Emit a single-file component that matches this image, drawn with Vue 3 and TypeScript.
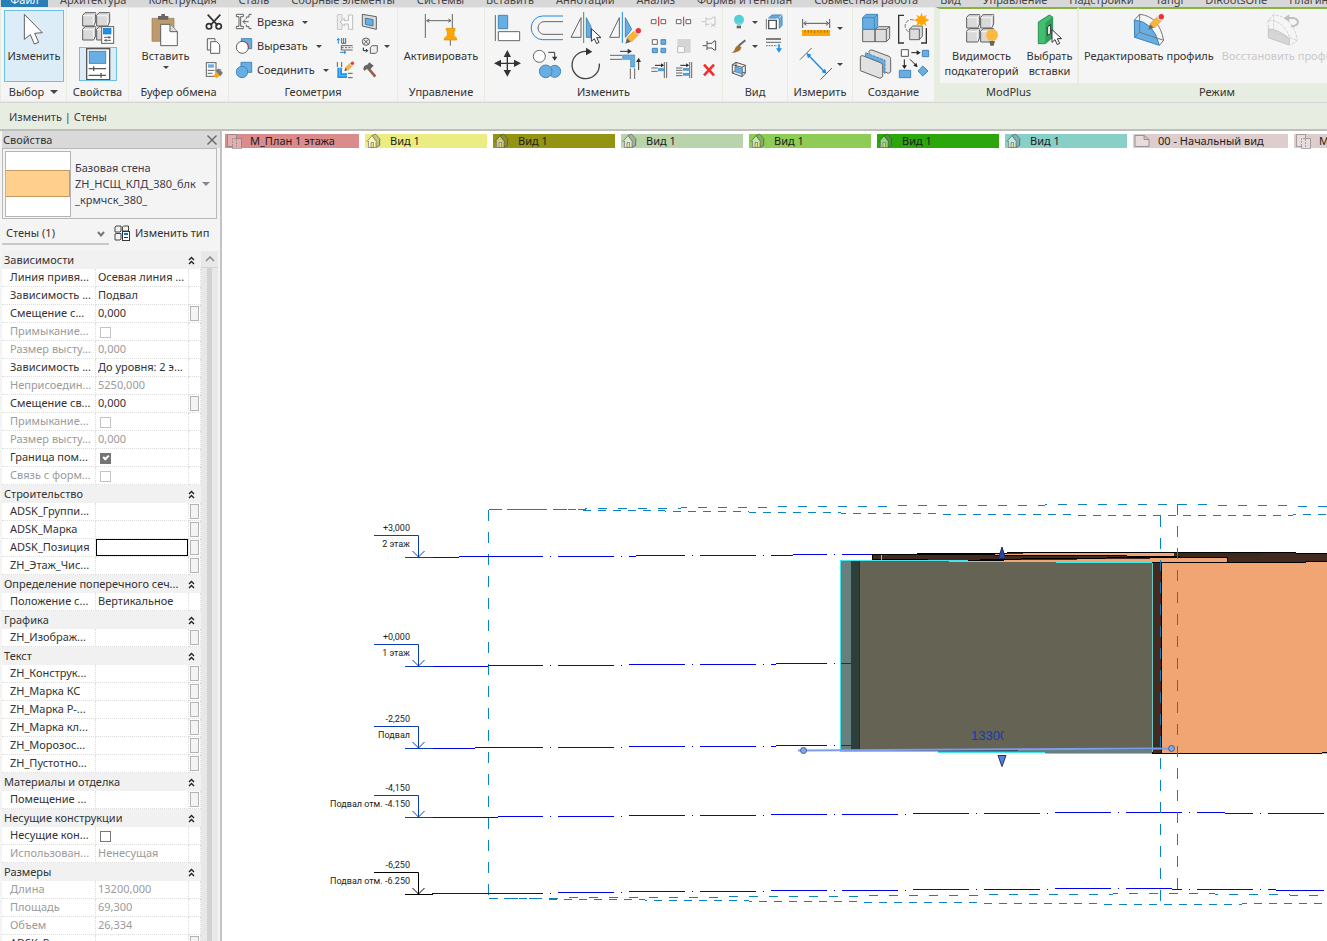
<script setup lang="ts">
import { ref } from 'vue'

interface Prop {
  name: string
  value?: string
  dim?: boolean
  check?: boolean
  checked?: boolean
  more?: boolean
  edit?: boolean
}
interface Group { title: string; rows: Prop[] }
interface Icon { box: string; art: string }
interface Tool { icon: string; title: string; caret?: boolean }
interface ViewTab { name: string; tone: string; kind: 'plan' | 'home' | 'sheet' }

const menu: string[] = [
  'Архитектура', 'Конструкция', 'Сталь', 'Сборные элементы', 'Системы', 'Вставить', 'Аннотации', 'Анализ',
  'Формы и генплан', 'Совместная работа', 'Вид', 'Управление', 'Надстройки', 'Tangl', 'DiRootsOne', 'Плагины'
]

const G = '#5f5f5f'
const B = '#68aee3'
const cubes = (x: number, y: number): string =>
  [[0, 0], [42, 0], [0, 42], [42, 42]].map(([a, b]) =>
    `<path d="M${x + a} ${y + b + 8}l7 -8h32v28l-6 12h-33z" fill="#d9d9d9" stroke="${G}" stroke-width="3"/><path d="M${x + a + 1} ${y + b + 9}h30l7 -8M${x + a + 32} ${y + b + 9}v28" fill="none" stroke="#f6f6f6" stroke-width="3"/>`).join('')
const pencil = (x: number, y: number): string =>
  `<g transform="translate(${x} ${y})"><path d="M0 0l5 -18l12 12z" fill="#666"/><path d="M5 -18l20 -19l13 12l-20 20z" fill="#f9b43c" stroke="#e0992a" stroke-width="2"/><path d="M25 -37l5 -6l13 12l-5 6z" fill="#ddd"/><circle cx="39" cy="-39" r="8" fill="#f03232"/></g>`
const cursor = (x: number, y: number): string =>
  `<path d="M${x} ${y}v38l9 -8l7 15l7 -4l-7 -14h13z" fill="#fff" stroke="#333" stroke-width="3"/>`

const icons: Record<string, Icon> = {
  modify: { box: '15 33 174 108', art: `<path d="M73 43V118L91 104L103 132L116 127L104 100L127 98Z" fill="#fff" stroke="${G}" stroke-width="3"/>` },
  types: { box: '234 30 114 111', art: cubes(245, 38) + `<rect x="302" y="80" width="36" height="50" fill="#fff" stroke="${G}" stroke-width="3"/><rect x="307" y="85" width="23" height="17" fill="#1e90e8" stroke="#1672bc" stroke-width="2"/><path d="M309 112h21M309 121h21M324 108v8M315 117v8" stroke="${G}" stroke-width="3"/>` },
  props: { box: '237 144 108 96', art: `<rect x="257" y="146" width="69" height="93" fill="#fff" stroke="#555" stroke-width="4"/><rect x="265" y="154" width="49" height="36" fill="${B}" stroke="#4789ba" stroke-width="3"/><path d="M263 206H315M278 199V213M263 226H315M300 219V233" stroke="#555" stroke-width="4"/>` },
  paste: { box: '426 30 144 108', art: `<path d="M456 52H522V121H456Z" fill="#bd9a6b" stroke="#9c7c52" stroke-width="2"/><path d="M474 45H484V39H495V45H505V56H474Z" fill="#666"/><path d="M482 70H510L532 92V134H482Z" fill="#fbfbfb" stroke="${G}" stroke-width="3"/><path d="M510 70V92H532" fill="#ddd" stroke="${G}" stroke-width="3"/>` },
  cut: { box: '606 30 72 72', art: `<path d="M623 44L653 76M661 44L631 76" stroke="#333" stroke-width="5"/><circle cx="627" cy="79" r="8" fill="none" stroke="#333" stroke-width="5"/><circle cx="656" cy="79" r="8" fill="none" stroke="#333" stroke-width="5"/>` },
  copyclip: { box: '606 102 72 72', art: `<path d="M622 116H645V122M622 116V150H631" fill="none" stroke="${G}" stroke-width="3"/><path d="M632 125H650L659 134V160H632Z" fill="#fff" stroke="${G}" stroke-width="3"/>` },
  match: { box: '606 174 72 72', art: `<rect x="619" y="188" width="29" height="41" fill="#fff" stroke="${G}" stroke-width="3"/><rect x="624" y="193" width="18" height="10" fill="${B}"/><path d="M623 211H644M623 220H637" stroke="${G}" stroke-width="3"/><path d="M640 228L652 216L661 225L650 235Z" fill="#ffa60a"/><path d="M649 212L655 207L667 218L661 227ZL664 209" fill="#777" stroke="#777" stroke-width="3"/>` },
  cope: { box: '6 30 72 72', art: `<path d="M19 43H40V50H32V79H40V86H19V79H27V50H19Z" fill="#fff" stroke="${G}" stroke-width="3"/><path d="M65 43H57V51H49V56M49 74V80H57V86H65M39 65H56M46 58L39 65L46 72" fill="none" stroke="${G}" stroke-width="3"/>` },
  cutgeo: { box: '6 102 72 72', art: `<path d="M34 116H65V146H54A20 20 0 0 0 34 124Z" fill="${B}" stroke="#4289bb" stroke-width="3"/><circle cx="37" cy="142" r="18" fill="#fff" stroke="${G}" stroke-width="3"/><path d="M34 124A18 18 0 0 1 55 145" fill="none" stroke="#e23030" stroke-width="3"/>` },
  join: { box: '6 174 72 72', art: `<path d="M33 187H65V217H33Z" fill="${B}" stroke="#4289bb" stroke-width="3"/><circle cx="36" cy="216" r="17" fill="${B}" stroke="#4289bb" stroke-width="3"/>` },
  notch: { box: '312 30 72 72', art: `<path d="M325 44H339V88H325Z" fill="#ececec" stroke="#c8c8c8" stroke-width="3"/><path d="M333 66L346 55V62H358V45H371V88H358V72H346V78Z" fill="#fafafa" stroke="#bdbdbd" stroke-width="3"/>` },
  split: { box: '312 102 72 72', art: `<path d="M328 131V117M324 121L328 115L332 121M333 157H350M345 153L351 157L345 161" fill="none" stroke="#1d87dc" stroke-width="3"/><path d="M338 114V130H350V114M344 114V130M371 137H337V150H371" fill="none" stroke="${G}" stroke-width="3"/><path d="M338 143H371" stroke="${G}" stroke-width="3" stroke-dasharray="6 4"/>` },
  walljoin: { box: '312 174 72 72', art: `<path d="M325 186V201M338 186V201M357 220H371M357 233H371" stroke="${G}" stroke-width="3"/><path d="M325 203H339V220H354V234H325Z" fill="#1f94ec"/><path d="M332 204V227H354" fill="none" stroke="#a8d4f5" stroke-width="2"/><g transform="translate(346 214) scale(.62)">${pencil(0, 0)}</g>` },
  opening: { box: '384 30 72 72', art: `<path d="M400 43L442 50V88L400 78Z" fill="#ddd" stroke="${G}" stroke-width="3"/><path d="M409 54L432 59V78L409 73Z" fill="${B}" stroke="#3f7ca9" stroke-width="3"/>` },
  demolish: { box: '384 102 72 72', art: `<circle cx="411" cy="125" r="11" fill="#eee" stroke="${G}" stroke-width="3"/><path d="M404 118L418 132M418 118L404 132" stroke="${G}" stroke-width="3"/><path d="M403 143V152H415M411 147L416 152L411 157" fill="none" stroke="#222" stroke-width="3"/><path d="M424 142L430 137H445V154L440 160H424Z" fill="#eee" stroke="${G}" stroke-width="3"/>` },
  hammer: { box: '384 174 72 72', art: `<path d="M416 203L439 230" stroke="#9b5b50" stroke-width="8"/><path d="M403 208Q402 196 415 194L421 187L434 197L422 209Q412 203 407 213Z" fill="#666"/>` },
  activate: { box: '564 30 144 108', art: `<path d="M589 39V111M670 39V83M593 59H666M601 54L593 59L601 64M658 54L666 59L658 64M664 117V134" fill="none" stroke="#666" stroke-width="3"/><path d="M652 82H678V89H675V104L683 112V117H646V112L655 104V89H652Z" fill="#ffa602" stroke="#d78a00" stroke-width="2"/>` },
  align: { box: '9 30 117 111', art: `<path d="M31 45V123" stroke="#666" stroke-width="3"/><path d="M40 46H68V86H40Z" fill="${B}" stroke="#4289bb" stroke-width="3"/><path d="M40 95H104V122H40Z" fill="#fff" stroke="#666" stroke-width="3"/>` },
  offset: { box: '126 30 117 111', art: `<path d="M234 48H173A34 35 0 0 0 173 119H234" fill="none" stroke="#1d87e5" stroke-width="3"/><path d="M234 65H177A18 19 0 0 0 177 103H234" fill="none" stroke="#666" stroke-width="3"/>` },
  mirrorpick: { box: '243 30 117 111', art: `<path d="M288 53V112H258Z" fill="none" stroke="#666" stroke-width="3"/><path d="M296 36V129" stroke="#1fa855" stroke-width="3"/><path d="M304 53L318 80V112H304Z" fill="${B}" stroke="#4289bb" stroke-width="3"/>${cursor(319, 86)}` },
  mirrordraw: { box: '360 30 117 111', art: `<path d="M403 53V112H374Z" fill="none" stroke="#666" stroke-width="3"/><path d="M412 36V129" stroke="#1d87e5" stroke-width="3"/><path d="M421 53L440 88L421 112Z" fill="${B}" stroke="#4289bb" stroke-width="3"/>${pencil(421, 131)}` },
  move: { box: '9 141 117 108', art: `<path d="M37 190H98M67 160V221" stroke="#333" stroke-width="4"/><path d="M27 190L48 179V201ZM108 190L87 179V201ZM67 150L56 171H78ZM67 230L56 210H78Z" fill="#333"/>` },
  copy: { box: '126 141 117 108', art: `<circle cx="163" cy="169" r="18" fill="#fff" stroke="#666" stroke-width="3"/><path d="M190 157H209V176" fill="none" stroke="#333" stroke-width="3"/><path d="M201 170H217L209 182Z" fill="#333"/><circle cx="209" cy="214" r="18" fill="${B}" stroke="#4289bb" stroke-width="3"/><circle cx="182" cy="214" r="19" fill="${B}" stroke="#4289bb" stroke-width="3"/>` },
  rotate: { box: '243 141 117 108', art: `<path d="M304 154A41 41 0 1 0 343 191" fill="none" stroke="#444" stroke-width="4"/><path d="M303 143L322 155L303 166Z" fill="#333"/>` },
  trim: { box: '360 141 117 108', art: `<path d="M375 166H411M375 178H411M436 205V237M449 205V237" stroke="#666" stroke-width="3"/><path d="M413 165H449V201H437V178H413Z" fill="${B}" stroke="#4289bb" stroke-width="2"/><path d="M405 154H432M461 210V182" stroke="#333" stroke-width="3"/><path d="M428 146L441 154L428 162ZM453 186L461 173L468 186Z" fill="#333"/>` },
  splitel: { box: '483 30 75 72', art: `<path d="M499 59H513V71H499ZM528 59H542V71H528Z" fill="#fff" stroke="#666" stroke-width="3"/><path d="M521 50V78" stroke="#e02020" stroke-width="3"/>` },
  splitgap: { box: '558 30 75 72', art: `<path d="M574 59H588V71H574ZM603 59H617V71H603Z" fill="#fff" stroke="#666" stroke-width="3"/><path d="M596 50V78" stroke="#e02020" stroke-width="3"/>` },
  unpin: { box: '633 30 75 72', art: `<path d="M650 65H662M663 51V79M663 57H678L685 51H690V76M663 73H673M677 70L691 81M691 70L677 81" fill="none" stroke="#c5c5c5" stroke-width="3"/>` },
  array: { box: '483 102 75 72', art: `<path d="M502 119H517V133H502Z" fill="#fff" stroke="#666" stroke-width="3"/><path d="M528 119H542V133H528ZM502 145H517V158H502ZM528 145H542V158H528Z" fill="${B}" stroke="#4289bb" stroke-width="3"/>` },
  scale: { box: '558 102 75 72', art: `<path d="M577 117H617V158H600V137H577Z" fill="#d5d5d5"/><path d="M578 139H598V158H578Z" fill="#f8f8f8" stroke="#bbb" stroke-width="3"/>` },
  pin: { box: '633 102 75 72', art: `<path d="M653 137H665M666 123V150M666 130H681L687 123H692V150H687L681 144H666" fill="none" stroke="#555" stroke-width="3"/>` },
  extend: { box: '483 174 75 72', art: `<path d="M499 204H518M499 214H518M538 186V234M545 186V234" stroke="#666" stroke-width="3"/><path d="M519 209H538" stroke="#4f9fd8" stroke-width="9"/><path d="M510 196H532" stroke="#222" stroke-width="3"/><path d="M528 190L537 196L528 202Z" fill="#222"/>` },
  extendmany: { box: '558 174 75 72', art: `<path d="M573 204H592M573 211H592M573 219H592M573 227H592M614 186V234M620 186V234" stroke="#666" stroke-width="3"/><path d="M594 208H613M594 223H613" stroke="#4f9fd8" stroke-width="8"/><path d="M586 196H608" stroke="#222" stroke-width="3"/><path d="M604 190L612 196L604 202Z" fill="#222"/>` },
  remove: { box: '633 174 75 72', art: `<path d="M657 194L687 226M687 194L657 226" stroke="#f22e2e" stroke-width="8"/>` },
  hide: { box: '21 30 72 72', art: `<circle cx="57" cy="59" r="15" fill="#55cfd5"/><path d="M49 68H66L63 76H51Z" fill="#7bd7db"/><path d="M50 77H63V85H50Z" fill="#666"/>` },
  override: { box: '21 102 72 72', art: `<path d="M55 138L76 121" stroke="#666" stroke-width="6"/><path d="M33 159Q44 154 46 143Q55 131 64 142Q62 158 33 159Z" fill="#a4702d"/>` },
  selbox: { box: '21 174 72 72', art: `<path d="M37 194L48 187L76 196V219L66 230L37 219ZM37 194L66 202L76 196M66 202V230M48 187V210L76 219M48 210L37 219" fill="#eee" stroke="#555" stroke-width="3"/><path d="M45 200L67 207V222L45 215Z" fill="${B}" stroke="#3f7ca9" stroke-width="2"/>` },
  displace: { box: '126 30 72 72', art: `<path d="M146 54L156 45H186V76L178 85V54Z" fill="${B}" stroke="#4289bb" stroke-width="3"/><path d="M177 54L186 45M171 54V61" stroke="#fff" stroke-width="2"/><path d="M146 61H169V86H146Z" fill="#fff" stroke="#555" stroke-width="4"/><path d="M139 57V88" stroke="#333" stroke-width="2"/>` },
  thin: { box: '126 102 72 72', art: `<path d="M138 117H183" stroke="#666" stroke-width="5"/><path d="M138 127H183" stroke="#666" stroke-width="3"/><path d="M138 137H172" stroke="#666" stroke-width="3" stroke-dasharray="5 3"/><path d="M177 133V149" stroke="#1f94ec" stroke-width="5"/><path d="M168 145H186L177 158Z" fill="#1f94ec"/>` },
  dim: { box: '231 30 108 108', art: `<path d="M245 57V84M326 57V84M251 70H320M256 64L248 70L256 76M315 64L323 70L315 76" fill="none" stroke="#555" stroke-width="3"/><path d="M243 90H327V108H243Z" fill="#ffa602"/><path d="M252 91V98M262 91V98M271 91V98M281 91V100M291 91V98M300 91V98M310 91V98M319 91V98" stroke="#555" stroke-width="2"/>` },
  aligned: { box: '231 138 108 108', art: `<path d="M237 179L272 144M298 239L333 204" stroke="#666" stroke-width="3"/><path d="M261 164L311 216" stroke="#1d87e5" stroke-width="4"/><path d="M256 159L271 164L261 175ZM317 221L302 217L312 206Z" fill="#1d87e5"/>` },
  assembly: { box: '417 30 108 111', art: `<path d="M428 88H465V125H428ZM465 88L476 80H509V115L499 125H465ZM465 88H499V125M499 88L509 80" fill="#ddd" stroke="#666" stroke-width="3"/><path d="M428 53L438 43H473V78L463 88H428ZM428 53H463V88M463 53L473 43" fill="${B}" stroke="#4289bb" stroke-width="3"/>` },
  group: { box: '525 30 108 111', art: `<path d="M552 46H536V129H552M603 129H619V84" fill="none" stroke="#333" stroke-width="4"/><path d="M581 60A18 18 0 1 0 568 96" fill="none" stroke="#777" stroke-width="3" stroke-dasharray="11 4"/><path d="M569 87L578 78H607V109L598 119H569ZM569 87H598V119" fill="#ddd" stroke="#666" stroke-width="3"/><path d="M605 38L609 50L620 44L616 55L628 60L616 66L620 78L609 71L605 84L600 71L589 77L593 66L581 60L594 55L589 44L600 50Z" fill="#ffa602"/>` },
  parts: { box: '417 141 108 108', art: `<path d="M447 154Q450 148 456 150L507 169Q512 171 512 176V216L505 220L447 196Z" fill="#ddd" stroke="#666" stroke-width="3"/><path d="M436 158L495 181V220L436 196Z" fill="${B}" stroke="#4289bb" stroke-width="3" stroke-dasharray="9 3"/><path d="M421 172Q421 166 428 167L481 188Q488 191 488 196V230L480 235L421 212Z" fill="#e1e1e1" stroke="#666" stroke-width="3"/>` },
  similar: { box: '525 141 108 108', art: `<path d="M544 149H565V169H544Z" fill="#fff" stroke="#555" stroke-width="3"/><path d="M607 151H626V170H607ZM538 211H572V233H538ZM608 198L624 213L608 228L594 213Z" fill="${B}" stroke="#4289bb" stroke-width="3"/><path d="M574 158H594M553 178V200M570 178L587 195" stroke="#222" stroke-width="3"/><path d="M590 151L602 158L590 165ZM546 196H561L553 207ZM593 202L580 197L589 188Z" fill="#222"/>` },
  subcat: { box: '96 30 120 108', art: cubes(110, 41) + '<circle cx="186" cy="102" r="18" fill="#fdb840"/><path d="M178 120H195L191 134H181Z" fill="#666"/>' },
  inserts: { box: '300 30 120 108', art: `<path d="M325 63L358 42L368 48V109L346 128H325Z" fill="#43bd70" stroke="#2a9251" stroke-width="3"/><path d="M346 66L368 48V109L346 128Z" fill="#2f9f5a"/><path d="M352 78L362 71V98L352 103Z" fill="#e8e8e8" stroke="#333" stroke-width="3"/>${cursor(366, 86)}` },
  editprofile: { box: '600 30 120 108', art: `<path d="M616 57Q675 62 691 133L617 109Z" fill="${B}" stroke="#3d83b5" stroke-width="3"/><path d="M616 57L632 40Q690 45 704 118L691 133M632 40V94L617 109M632 94L704 118" fill="none" stroke="#777" stroke-width="3"/>${pencil(658, 86)}` },
  restore: { box: '1008 30 120 108', art: `<path d="M1024 83Q1060 88 1087 113V132L1024 110Z" fill="#d6d6d6" stroke="#c4c4c4" stroke-width="3"/><path d="M1024 80V57L1040 41Q1100 50 1111 118L1090 133M1040 41V94L1110 118M1024 57Q1070 60 1089 110" fill="none" stroke="#cfcfcf" stroke-width="3" stroke-dasharray="9 4"/><path d="M1082 51H1099Q1113 54 1113 64Q1111 75 1092 76" fill="none" stroke="#c0c0c0" stroke-width="6"/><path d="M1070 51L1087 40V62Z" fill="#c0c0c0"/>` }
}

const clipboard: Tool[] = [
  { icon: 'cut', title: 'Вырезать в буфер' }, { icon: 'copyclip', title: 'Копировать в буфер' }, { icon: 'match', title: 'Копировать свойства типа' }
]
const geoMain = [
  { icon: 'cope', label: 'Врезка' }, { icon: 'cutgeo', label: 'Вырезать' }, { icon: 'join', label: 'Соединить' }
]
const geoSmall: Tool[] = [
  { icon: 'notch', title: 'Врезка' }, { icon: 'opening', title: 'Проем' },
  { icon: 'split', title: 'Разделить' }, { icon: 'demolish', title: 'Снести', caret: true },
  { icon: 'walljoin', title: 'Соединение стен' }, { icon: 'hammer', title: 'Снос' }
]
const modifyBig: Tool[] = [
  { icon: 'align', title: 'Выровнять' }, { icon: 'offset', title: 'Сместить' }, { icon: 'mirrorpick', title: 'Зеркало' }, { icon: 'mirrordraw', title: 'Зеркало по оси' },
  { icon: 'move', title: 'Переместить' }, { icon: 'copy', title: 'Копировать' }, { icon: 'rotate', title: 'Повернуть' }, { icon: 'trim', title: 'Обрезать' }
]
const modifySmall: Tool[] = [
  { icon: 'splitel', title: 'Разделить элемент' }, { icon: 'splitgap', title: 'Разделить с зазором' }, { icon: 'unpin', title: 'Открепить' },
  { icon: 'array', title: 'Массив' }, { icon: 'scale', title: 'Масштаб' }, { icon: 'pin', title: 'Прикрепить' },
  { icon: 'extend', title: 'Удлинить' }, { icon: 'extendmany', title: 'Удлинить несколько' }, { icon: 'remove', title: 'Удалить' }
]
const viewTools: Tool[] = [
  { icon: 'hide', title: 'Скрыть', caret: true }, { icon: 'displace', title: 'Сместить элементы' },
  { icon: 'override', title: 'Переопределить', caret: true }, { icon: 'thin', title: 'Линии' },
  { icon: 'selbox', title: 'Рамка выбора' }
]
const measureTools: Tool[] = [{ icon: 'dim', title: 'Размер', caret: true }, { icon: 'aligned', title: 'Измерить', caret: true }]
const createTools: Tool[] = [
  { icon: 'assembly', title: 'Сборка' }, { icon: 'group', title: 'Группа' }, { icon: 'parts', title: 'Части' }, { icon: 'similar', title: 'Подобные' }
]

const tabs: ViewTab[] = [
  { name: 'М_План 1 этажа', tone: 'red', kind: 'plan' },
  { name: 'Вид 1', tone: 'yellow', kind: 'home' },
  { name: 'Вид 1', tone: 'olive', kind: 'home' },
  { name: 'Вид 1', tone: 'sage', kind: 'home' },
  { name: 'Вид 1', tone: 'lime', kind: 'home' },
  { name: 'Вид 1', tone: 'green', kind: 'home' },
  { name: 'Вид 1', tone: 'teal', kind: 'home' },
  { name: '00 - Начальный вид', tone: 'rose', kind: 'sheet' },
  { name: 'М_План', tone: 'rose', kind: 'plan' }
]

const groups = ref<Group[]>([
  { title: 'Зависимости', rows: [
    { name: 'Линия привя...', value: 'Осевая линия ...' },
    { name: 'Зависимость ...', value: 'Подвал' },
    { name: 'Смещение с...', value: '0,000', more: true },
    { name: 'Примыкание...', check: true, dim: true },
    { name: 'Размер высту...', value: '0,000', dim: true },
    { name: 'Зависимость ...', value: 'До уровня: 2 э...' },
    { name: 'Неприсоедин...', value: '5250,000', dim: true },
    { name: 'Смещение св...', value: '0,000', more: true },
    { name: 'Примыкание...', check: true, dim: true },
    { name: 'Размер высту...', value: '0,000', dim: true },
    { name: 'Граница пом...', check: true, checked: true },
    { name: 'Связь с форм...', check: true, dim: true }
  ] },
  { title: 'Строительство', rows: [
    { name: 'ADSK_Группи...', more: true },
    { name: 'ADSK_Марка', more: true },
    { name: 'ADSK_Позиция', more: true, edit: true },
    { name: 'ZH_Этаж_Чис...', more: true }
  ] },
  { title: 'Определение поперечного сеч...', rows: [{ name: 'Положение с...', value: 'Вертикальное' }] },
  { title: 'Графика', rows: [{ name: 'ZH_Изображ...', more: true }] },
  { title: 'Текст', rows: [
    { name: 'ZH_Конструк...', more: true },
    { name: 'ZH_Марка КС', more: true },
    { name: 'ZH_Марка Р-...', more: true },
    { name: 'ZH_Марка кл...', more: true },
    { name: 'ZH_Морозос...', more: true },
    { name: 'ZH_Пустотно...', more: true }
  ] },
  { title: 'Материалы и отделка', rows: [{ name: 'Помещение ...', more: true }] },
  { title: 'Несущие конструкции', rows: [
    { name: 'Несущие кон...', check: true },
    { name: 'Использован...', value: 'Ненесущая', dim: true }
  ] },
  { title: 'Размеры', rows: [
    { name: 'Длина', value: '13200,000', dim: true },
    { name: 'Площадь', value: '69,300', dim: true },
    { name: 'Объем', value: '26,334', dim: true },
    { name: 'ADSK_Размер...', more: true }
  ] }
])

const levels = [
  { y: 557, mark: '+3,000', name: '2 этаж', black: false },
  { y: 666, mark: '+0,000', name: '1 этаж', black: false },
  { y: 748, mark: '-2,250', name: 'Подвал', black: false },
  { y: 817, mark: '-4,150', name: 'Подвал отм. -4.150', black: false },
  { y: 894, mark: '-6,250', name: 'Подвал отм. -6.250', black: true }
]
</script>

<template>
  <div class="app">
    <nav class="menu">
      <a href="#" class="file">Файл</a>
      <a v-for="m in menu" :key="m" href="#">{{ m }}</a>
    </nav>

    <div class="ribbon">
      <section class="panel p-select">
        <div class="body">
          <button class="big active">
            <svg class="i58" :viewBox="icons.modify.box" v-html="icons.modify.art" />
            <span>Изменить</span>
          </button>
        </div>
        <h2><button class="title-btn">Выбор <i class="caret wide" /></button></h2>
      </section>

      <section class="panel p-props">
        <div class="body col">
          <button class="cell c38" aria-label="Свойства типа"><svg :viewBox="icons.types.box" v-html="icons.types.art" /></button>
          <button class="cell on" aria-label="Свойства"><svg :viewBox="icons.props.box" v-html="icons.props.art" /></button>
        </div>
        <h2>Свойства</h2>
      </section>

      <section class="panel p-clip">
        <div class="body">
          <button class="big">
            <svg class="i48" :viewBox="icons.paste.box" v-html="icons.paste.art" />
            <span>Вставить</span>
            <i class="caret" />
          </button>
          <div class="smalls one">
            <button v-for="t in clipboard" :key="t.icon" class="sm" :aria-label="t.title"><svg :viewBox="icons[t.icon].box" v-html="icons[t.icon].art" /></button>
          </div>
        </div>
        <h2>Буфер обмена</h2>
      </section>

      <section class="panel p-geo">
        <div class="body">
          <div class="lines">
            <button v-for="g in geoMain" :key="g.icon" class="line">
              <svg :viewBox="icons[g.icon].box" v-html="icons[g.icon].art" /><span>{{ g.label }}</span><i class="caret" />
            </button>
          </div>
          <div class="smalls geo">
            <button v-for="t in geoSmall" :key="t.icon" class="sm" :aria-label="t.title"><svg :viewBox="icons[t.icon].box" v-html="icons[t.icon].art" /><i v-if="t.caret" class="caret" /></button>
          </div>
        </div>
        <h2>Геометрия</h2>
      </section>

      <section class="panel p-act">
        <div class="body">
          <button class="big">
            <svg class="i48" :viewBox="icons.activate.box" v-html="icons.activate.art" />
            <span>Активировать</span>
          </button>
        </div>
        <h2>Управление</h2>
      </section>

      <section class="panel p-mod">
        <div class="body">
          <div class="bigs">
            <button v-for="t in modifyBig" :key="t.icon" class="cell" :aria-label="t.title"><svg :viewBox="icons[t.icon].box" v-html="icons[t.icon].art" /></button>
          </div>
          <div class="smalls three">
            <button v-for="t in modifySmall" :key="t.icon" class="sm" :aria-label="t.title"><svg :viewBox="icons[t.icon].box" v-html="icons[t.icon].art" /></button>
          </div>
        </div>
        <h2>Изменить</h2>
      </section>

      <section class="panel p-view">
        <div class="body">
          <div class="smalls view">
            <button v-for="t in viewTools" :key="t.icon" class="sm" :aria-label="t.title"><svg :viewBox="icons[t.icon].box" v-html="icons[t.icon].art" /><i v-if="t.caret" class="caret" /></button>
          </div>
        </div>
        <h2>Вид</h2>
      </section>

      <section class="panel p-meas">
        <div class="body col">
          <button v-for="t in measureTools" :key="t.icon" class="sm meas" :aria-label="t.title"><svg :viewBox="icons[t.icon].box" v-html="icons[t.icon].art" /><i class="caret" /></button>
        </div>
        <h2>Измерить</h2>
      </section>

      <section class="panel p-create">
        <div class="body">
          <div class="bigs two">
            <button v-for="t in createTools" :key="t.icon" class="cell" :aria-label="t.title"><svg :viewBox="icons[t.icon].box" v-html="icons[t.icon].art" /></button>
          </div>
        </div>
        <h2>Создание</h2>
      </section>

      <section class="panel ctx p-plus">
        <div class="body">
          <button class="big">
            <svg class="i40" :viewBox="icons.subcat.box" v-html="icons.subcat.art" />
            <span>Видимость<br>подкатегорий</span>
          </button>
          <button class="big">
            <svg class="i40" :viewBox="icons.inserts.box" v-html="icons.inserts.art" />
            <span>Выбрать<br>вставки</span>
          </button>
        </div>
        <h2>ModPlus</h2>
      </section>

      <section class="panel ctx p-mode">
        <div class="body">
          <button class="big">
            <svg class="i40" :viewBox="icons.editprofile.box" v-html="icons.editprofile.art" />
            <span>Редактировать профиль</span>
          </button>
          <button class="big" disabled>
            <svg class="i40" :viewBox="icons.restore.box" v-html="icons.restore.art" />
            <span>Восстановить профиль</span>
          </button>
        </div>
        <h2>Режим</h2>
      </section>
    </div>

    <div class="options">Изменить | Стены</div>

    <main class="work">
      <aside class="palette">
        <header class="pal-head">
          <span>Свойства</span>
          <button aria-label="Закрыть"><svg viewBox="0 0 10 10"><path d="M0.5 0.5L9.5 9.5M9.5 0.5L0.5 9.5" /></svg></button>
        </header>
        <button class="type">
          <span class="thumb"><i /></span>
          <span class="type-name">Базовая стена<br>ZH_НСЩ_КЛД_380_блк<br>_крмчск_380_</span>
          <i class="caret grey" />
        </button>
        <div class="filter">
          <div class="pick">
            <select aria-label="Фильтр элементов"><option>Стены (1)</option></select>
            <svg viewBox="0 0 8 6"><path d="M1 1L4 4.5L7 1" /></svg>
          </div>
          <button class="edit-type">
            <svg viewBox="0 0 16 16">
              <path d="M1 2L2 1H7V6L6 7H1ZM8.500 2L9.500 1H14.500V6H8.500ZM1 9L2 8.500H7V14L6 15H1Z" fill="#f3f3f3" stroke="#444" />
              <rect x="8.500" y="6.500" width="7" height="9" fill="#fff" stroke="#334" />
              <path d="M10 8h4v2h-4z" fill="#1672bc" /><path d="M10 12.500h4" stroke="#334" />
            </svg>
            <span>Изменить тип</span>
          </button>
        </div>
        <div class="grid-wrap">
          <table>
            <colgroup><col class="cn"><col class="cv"><col class="cb"></colgroup>
            <tbody v-for="(g, gi) in groups" :key="g.title">
              <tr class="group">
                <th colspan="3"><div><span>{{ g.title }}</span>
                  <button :aria-label="'Свернуть ' + g.title"><svg viewBox="0 0 7 9"><path d="M1 4L3.500 1.500L6 4M1 8L3.500 5.500L6 8" /></svg></button></div></th>
              </tr>
              <tr v-for="(r, ri) in g.rows" :key="ri" :class="{ dim: r.dim }">
                <td class="name"><label :for="`p${gi}-${ri}`">{{ r.name }}</label></td>
                <td class="val">
                  <input v-if="r.check" :id="`p${gi}-${ri}`" v-model="r.checked" type="checkbox" :disabled="r.dim">
                  <input v-else :id="`p${gi}-${ri}`" v-model="r.value" type="text" :class="{ edit: r.edit }" :disabled="r.dim">
                </td>
                <td class="more"><button v-if="r.more" :aria-label="'Связать ' + r.name" /></td>
              </tr>
            </tbody>
          </table>
          <div class="scroll">
            <button aria-label="Вверх"><svg viewBox="0 0 10 6"><path d="M1 5L5 1L9 5" /></svg></button>
            <i />
          </div>
        </div>
      </aside>

      <section class="view">
        <div class="tabs">
          <button v-for="(t, i) in tabs" :key="i" class="tab" :class="[t.tone, t.kind]">
            <svg v-if="t.kind === 'home'" viewBox="0 0 16 16">
              <path d="M6 2.500L9.500 1L14.500 6.500V12.500L10 15V9Z" fill="#777" fill-opacity=".35" />
              <path d="M2 8L6 3.500L10 8.500V15H2Z" fill="#fff" fill-opacity=".5" />
              <path d="M0.500 9L6 2.500L10.500 8.500M2.500 8V14.500H10V9M6 2.500L9.500 1L14.500 6.500M13.500 6.500V12.500L10 14.500" fill="none" stroke="#444" stroke-opacity=".5" />
              <path d="M5 9.500H7.500V14.500H5Z" fill="#f5d27c" fill-opacity=".8" stroke="#555" stroke-opacity=".5" />
            </svg>
            <svg v-else-if="t.kind === 'plan'" viewBox="0 0 16 16">
              <path d="M1.500 1.500H10.500V5.500H15.500V15.500H6.500V13.500H1.500Z" fill="#fff" fill-opacity=".3" stroke="#777" stroke-opacity=".6" />
              <path d="M6.500 13V5.500H10M10.500 6V15" fill="none" stroke="#777" stroke-opacity=".6" stroke-dasharray="2 1" />
            </svg>
            <svg v-else viewBox="0 0 16 16"><path d="M1 2.500h9l5 4v7h-14zM10 2.500v4h5" fill="#fff" fill-opacity=".3" stroke="#777" stroke-opacity=".7" /></svg>
            <span>{{ t.name }}</span>
          </button>
        </div>

        <svg class="canvas" role="img" aria-label="Трёхмерный вид с уровнями">
          <defs><clipPath id="dimclip"><rect x="960" y="725" width="44" height="20" /></clipPath></defs>
          <g transform="translate(-222 -150)">
            <g class="box">
              <path class="d22" d="M488.500 510V898" />
              <path d="M489 509.500H502M507 509.500H538" />
              <path class="up" d="M538 509.500L824 506.500L971 505.500L1120 504.500H1177L1327 506.500" />
              <path class="lo" d="M538 509.500L790 512.500L990 514.500L1160 515.500L1260 515.500L1327 514.500" />
              <path class="up" d="M489 898.500L800 896.500L1177 893.500L1327 895.500" />
              <path class="lo" d="M489 898.500L800 901.500L1160 904.500L1327 903.500" />
            </g>

            <g class="level-lines">
              <path d="M432 557.500H459M459 556.500H543M550 556.500h1" /><path class="dd" d="M558 556.500L872 554.500" />
              <path d="M432 666.500H488M488 665.500H543M550 665.500h1" /><path class="dd" d="M558 665.500L851 663.500" />
              <path d="M432 748.500H475M475 747.500H543M550 747.500h1" /><path class="dd" d="M558 747.500L851 745.500" />
              <path d="M432 817.500H498M498 816.500H543M550 816.500h1" /><path class="dd" d="M558 816.500L1120 812.500L1327 813.500" />
              <path d="M432 893.500H543M550 893.500h1" /><path class="dd" d="M558 892.500L1120 888.500L1327 890.500" />
            </g>

            <g v-for="l in levels" :key="l.mark" class="level" :class="{ black: l.black }">
              <path :d="`M374 ${l.y - 21.5}H418.500V${l.y}M412.500 ${l.y - 6}L418.500 ${l.y}L424.500 ${l.y - 6}M405 ${l.y + 0.5}H433`" />
              <text x="410" :y="l.y - 26">{{ l.mark }}</text>
              <text x="410" :y="l.y - 10">{{ l.name }}</text>
            </g>

            <g shape-rendering="crispEdges">
              <path d="M872 554.500L1053 552.500H1264L1327 553.500V562H1152L872 559.500Z" fill="#422a20" stroke="#000" />
              <path d="M1174 553H1262V556H1174Z" fill="#392b1a" />
              <path d="M881 555h1v5h-1z" fill="#f0a573" />
              <path d="M967 554L1079 553H1174V556H1074L967 555Z" fill="#f0a573" />
              <path d="M913 554.500L1074 555.500L1180 556.500" fill="none" stroke="#000" />
              <path d="M968 561L1150 558.500L1227.500 557.500V562H968Z" fill="#f0a573" />
              <path d="M980 559.500L1150 557.500H1227.500V562" fill="none" stroke="#000" />
              <path d="M1162 562H1327V753.500H1162Z" fill="#f0a573" />
              <path d="M1152 562H1162V754H1152Z" fill="#422a20" />
              <path d="M1152 562.500H1306M1306 561.500H1327M1161.500 562V754M1152 753.500H1177M1177 753.500H1322M1322 752.500H1327M1152.500 751V754" fill="none" stroke="#000" />
              <path d="M840 560H851V750H840Z" fill="#677f7f" />
              <path d="M851 560H860V750H851Z" fill="#2d3f3b" />
              <path d="M860 561H949V562H1152V749L860 750Z" fill="#656353" />
              <path d="M859.500 560V750" stroke="#22312e" />
              <path d="M860 750.500L1152 749.500V753.500L935 752Z" fill="#668080" />
              <path d="M860 750.500H1018M1018 749.500H1152" stroke="#263230" />
              <path d="M841 663.500H851M841 745.500H851" stroke="#1a2a80" />
              <path d="M840.500 751V560M840 560.500H968M949 561.500H1074M1056 562.500H1152" fill="none" stroke="#40e8ec" />
              <path d="M1152.500 562.500V752" stroke="#70c8c4" />
              <path d="M840 751.500H938M938 752.500H1045M1045 753.500H1152" stroke="#40e8ec" />
            </g>

            <g class="box">
              <path class="d22" d="M1160.500 516V904" /><path class="d22" d="M1177.500 504V893" />
            </g>

            <path d="M798 750.500L1172 748.500" stroke="#7b9cf0" stroke-width="2" />
            <circle cx="803.500" cy="750.500" r="3" class="grip" /><circle cx="1171.500" cy="748.500" r="3" class="grip" />
            <path d="M1002 547L1005.500 558.500H998.500Z" fill="#2747a4" stroke="#1d2b5e" />
            <path d="M998 755.500H1006L1002 766.500Z" fill="#5580dc" stroke="#23335f" />
            <text x="971" y="740" class="dim-text" clip-path="url(#dimclip)">13300</text>
          </g>
        </svg>
      </section>
    </main>
  </div>
</template>

<style>
html, body { margin: 0; height: 100%; overflow: hidden; }
</style>

<style scoped>
.app { height: 100vh; display: flex; flex-direction: column; overflow: hidden; background: #fff; color: #333; font: 11px/16px "Noto Sans", "Open Sans", sans-serif; }
button { border: 0; padding: 0; margin: 0; background: none; font: inherit; color: inherit; }
svg { display: block; flex: none; }
.menu { flex: none; height: 7px; background: #d8d8d8; display: flex; align-items: flex-end; overflow: hidden; padding-left: 1px; }
.menu a { flex: none; color: #444; text-decoration: none; line-height: 14px; height: 14px; white-space: nowrap; margin-right: 22px; }
.menu .file { background: #2a7db5; color: #fff; width: 47px; text-align: center; margin-right: 12px; }

.ribbon { flex: none; height: 94px; display: flex; background: #e8ede1; border-bottom: 1px solid #e8ede1; padding-left: 1px; overflow: hidden; box-shadow: inset 0 1px #e8ede1; }
.panel { flex: none; display: flex; flex-direction: column; background: #f5f5f5; border-right: 1px solid #e8ede1; margin-top: 1px; box-sizing: border-box; }
.body { flex: 1; display: flex; padding-top: 2px; box-sizing: border-box; }
.body.col { flex-direction: column; align-items: center; }
.panel h2 { margin: 0; height: 18px; font-size: 11px; font-weight: 400; line-height: 18px; text-align: center; white-space: nowrap; }
.title-btn { display: inline-flex; align-items: center; gap: 6px; }
.p-select { width: 66px; }
.p-props { width: 62px; }
.p-clip { width: 100px; }
.p-geo { width: 169px; }
.p-act { width: 87px; }
.p-mod { width: 238px; }
.p-view { width: 65px; }
.p-meas { width: 65px; }
.p-create { width: 82px; }
.ctx { border-top: 2px solid #86b53e; margin-top: 0; border-right: 2px solid #e8ede1; }
.ctx .body { padding-top: 1px; }
.ctx h2 { background: #e8ede1; }
.p-plus { width: 144px; border-left: 5px solid #e8ede1; }
.p-mode { width: 278px; }

.big { display: flex; flex-direction: column; align-items: center; line-height: 15px; white-space: nowrap; }
.big[disabled] { color: #c9c9c9; }
.big .caret { margin-top: 3px; }
.active { width: 60px; height: 72px; margin-left: 3px; box-sizing: border-box; border: 1px solid #6cbfe8; background: #dcedf7; }
.active span { padding-top: 1px; }
.i58 { width: 58px; height: 36px; }
.i48 { width: 48px; height: 38px; }
.i40 { width: 40px; height: 38px; }
.caret { flex: none; width: 0; height: 0; border: 3px solid transparent; border-top-color: #444; border-bottom: 0; }
.caret.wide { border-width: 4px 4px 0; }
.caret.grey { border-width: 4px 4px 0; border-top-color: #888; }
.cell svg { width: 100%; height: 100%; }
.c38 { width: 38px; height: 37px; }
.on { width: 38px; height: 34px; box-sizing: border-box; border: 1px solid #6cbfe8; background: #dcedf7; }
.p-clip .big { width: 73px; }
.p-act .big { flex: 1; }
.smalls { display: grid; grid-auto-rows: 24px; align-content: start; }
.sm { display: flex; align-items: center; }
.sm svg { width: 24px; height: 24px; }
.lines { width: 105px; padding-left: 3px; box-sizing: border-box; }
.line { display: flex; align-items: center; height: 24px; white-space: nowrap; }
.line svg { width: 24px; height: 24px; }
.line span { margin: 0 8px 0 1px; }
.geo { grid-template-columns: 24px 40px; }
.geo .caret { margin-left: 3px; }
.bigs { display: grid; grid-template-columns: repeat(4, 39px); grid-template-rows: 37px 36px; padding-left: 3px; }
.bigs.two { grid-template-columns: 36px 36px; padding-left: 6px; }
.three { grid-template-columns: repeat(3, 25px); margin-left: 2px; }
.three .sm svg { width: 25px; }
.view.smalls { grid-template-columns: 35px 24px; padding-left: 4px; }
.view .caret { margin-left: 1px; }
.sm.meas { height: 36px; }
.sm.meas svg { width: 36px; height: 36px; }
.sm.meas .caret { margin-left: 3px; }
.p-plus .body { justify-content: center; gap: 8px; }
.p-mode .body { gap: 8px; padding-left: 5px; }

.options { flex: none; height: 26px; line-height: 27px; padding-left: 9px; background: #e8ede1; border-top: 1px solid #d5d5d5; border-bottom: 2px solid #bfbfbf; color: #3c3c4c; }

.work { flex: 1; min-height: 0; display: flex; }
.palette { flex: none; width: 218px; border-right: 2px solid #c3c3c3; background: #f4f4f4; display: flex; flex-direction: column; min-height: 0; padding-left: 2px; }
.pal-head { flex: none; height: 17px; display: flex; align-items: center; justify-content: space-between; background: #d9d9d9; padding: 0 3px 0 1px; }
.pal-head svg { width: 10px; height: 10px; }
.pal-head path { stroke: #666; stroke-width: 1.400; }
.type { flex: none; height: 71px; margin: 0 3px 0 0; border: 1px solid #b8b8b8; display: flex; align-items: center; text-align: left; padding-left: 2px; box-sizing: border-box; }
.thumb { width: 66px; height: 66px; box-sizing: border-box; border: 1px solid #b5b5b5; background: #fff; display: flex; align-items: center; }
.thumb i { flex: 1; height: 27px; box-sizing: border-box; background: #ffd08d; border: solid #c59a62; border-width: 1px 1px 1px 0; }
.type-name { width: 127px; margin-left: 4px; white-space: nowrap; color: #3c3c4c; }
.filter { flex: none; height: 32px; display: flex; align-items: flex-start; }
.pick { position: relative; width: 107px; height: 26px; border-bottom: 2px solid #c8c8c8; box-sizing: border-box; }
.pick select { appearance: none; border: 0; background: none; font: inherit; color: inherit; width: 100%; height: 26px; padding: 2px 0 0 4px; }
.pick svg { position: absolute; right: 4px; top: 12px; width: 8px; height: 6px; }
.pick path { fill: none; stroke: #777; stroke-width: 2; }
.edit-type { display: flex; align-items: center; height: 27px; margin-left: 5px; gap: 5px; white-space: nowrap; }
.edit-type svg { width: 16px; height: 16px; }

.grid-wrap { flex: 1; min-height: 0; display: flex; overflow: hidden; align-items: stretch; }
table { flex: none; width: 199px; table-layout: fixed; border-spacing: 0; background: #fff; height: 0; }
.cn { width: 94px; }
.cv { width: 93px; }
.cb { width: 12px; }
td, th { height: 18px; padding: 0; box-sizing: border-box; font-weight: 400; line-height: 16px; white-space: nowrap; overflow: hidden; }
td { border-bottom: 1px dotted #dcdcdc; border-right: 1px dotted #dcdcdc; vertical-align: top; }
th { background: #f1f1f1; text-align: left; }
th div { display: flex; align-items: center; justify-content: space-between; padding: 0 6px 0 2px; }
th button svg { width: 7px; height: 9px; }
th path { fill: none; stroke: #222; stroke-width: 1.400; }
.name label { display: block; padding-left: 8px; }
.dim { color: #9b9b9b; }
.val input[type="text"] { display: block; width: 100%; height: 16px; box-sizing: border-box; border: 0; padding: 0 0 0 2px; margin: 0; background: none; font: inherit; color: inherit; outline: 0; }
.val input[type="text"].edit { height: 17px; border: 1px solid #000; background: #fff; }
.val input[type="checkbox"] { appearance: none; display: block; width: 11px; height: 11px; box-sizing: border-box; border: 1px solid #777; background: #fff; margin: 4px 0 0 4px; }
.val input[type="checkbox"]:disabled { border-color: #c4c4c4; }
.val input[type="checkbox"]:checked { background: #757575; position: relative; }
.val input[type="checkbox"]:checked::after { content: ""; position: absolute; left: 2px; top: 1px; width: 4px; height: 2px; border: solid #fff; border-width: 0 0 2px 2px; transform: rotate(-45deg); }
.more button { display: block; width: 9px; height: 15px; box-sizing: border-box; border: 1px solid #b4b4b4; background: #f4f4f4; margin: 1px 0 0 1px; }
.scroll { width: 17px; background: #e8e8e8; display: flex; flex-direction: column; align-items: center; }
.scroll button { width: 17px; height: 17px; display: flex; align-items: center; justify-content: center; border-bottom: 1px solid #d4d4d4; box-sizing: border-box; }
.scroll svg { width: 10px; height: 6px; }
.scroll path { fill: none; stroke: #888; stroke-width: 1.500; }
.scroll i { flex: 1; width: 5px; background: #d2d2d2; }

section.view { flex: 1; min-width: 0; display: flex; flex-direction: column; overflow: hidden; background: #fff; }
.tabs { flex: none; display: flex; gap: 6px; padding: 3px 0 0 3px; height: 16px; overflow: hidden; }
.tab { flex: none; width: 122px; height: 14px; display: flex; align-items: center; color: #1c1c1c; white-space: nowrap; line-height: 16px; text-align: left; }
.tab svg { width: 16px; height: 16px; margin: 0 8px 0 1px; }
.tab.plan { width: 134px; }
.tab.sheet { width: 155px; }
.red { background: #da8b8b; }
.yellow { background: #ebec82; }
.olive { background: #949414; }
.sage { background: #b9d3ac; }
.lime { background: #8ecc55; }
.green { background: #2ba70c; }
.teal { background: #88cfc8; }
.rose { background: #dfcdcd; }

.canvas { flex: 1; width: 100%; min-height: 0; overflow: hidden; }
.box path { fill: none; stroke: #0a82be; shape-rendering: crispEdges; }
.box .d22 { stroke-dasharray: 11 11; }
.box .up { stroke-dasharray: 9 11; }
.box .lo { stroke-dasharray: 8 7; }
.level-lines path { fill: none; stroke: #0000f0; shape-rendering: crispEdges; }
.level-lines .dd { stroke-dasharray: 56 7 1 7; }
.level path { fill: none; stroke: #0a3cb4; }
.level.black path { stroke: #000; }
.level text { font: 9px Roboto, "Liberation Sans", sans-serif; text-anchor: end; fill: #222; }
.grip { fill: #7fa6ee; stroke: #4a5f8e; }
.dim-text { font: 13px "Liberation Sans", sans-serif; fill: #0f3db4; }
</style>
